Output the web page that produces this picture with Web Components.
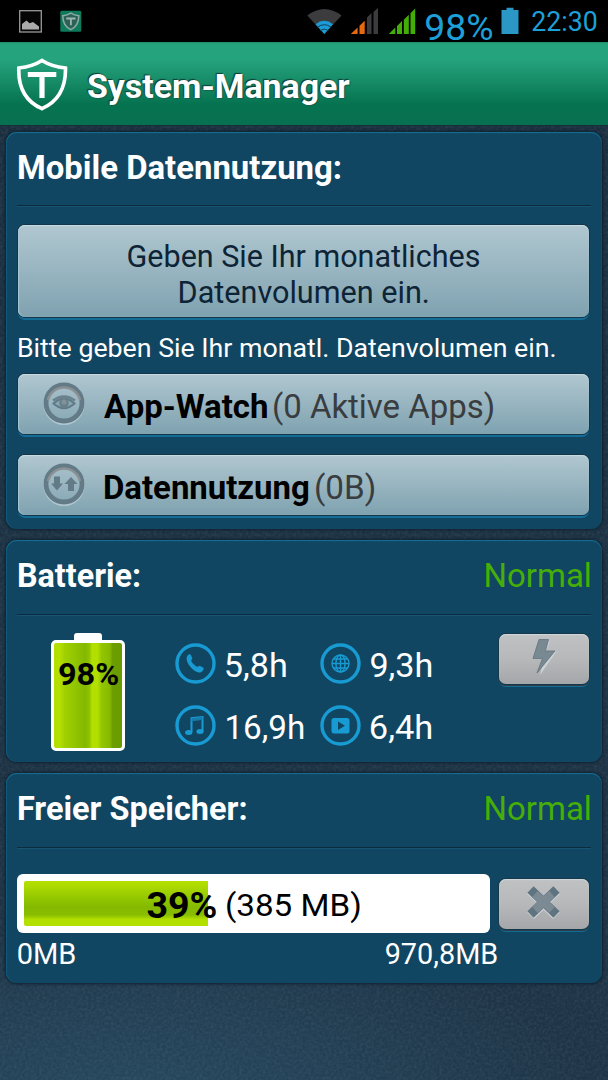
<!DOCTYPE html>
<html lang="de">
<head>
<meta charset="utf-8">
<title>System-Manager</title>
<style>
html, body {
    margin: 0;
    height: 100%;
    overflow: hidden;
    font-family: Roboto, "Liberation Sans", sans-serif;
    color: #fff;
    background: #1c3345;
}
</style>
</head>
<body>
<system-manager></system-manager>

<script>
const define = (name, html, setup) => {
    const template = document.createElement('template');
    template.innerHTML = html;
    window.customElements.define(name, class extends HTMLElement {
        constructor() {
            super();
            this.attachShadow({mode: 'open'});
            this.shadowRoot.appendChild(template.content.cloneNode(true));
        }

        connectedCallback() {
            if (setup) setup(this, this.shadowRoot);
        }
    });
};

// One line of text whose glyphs are condensed to fill "width" exactly.
class FitLabel extends HTMLElement {

    constructor() {
        super();
        this.attachShadow({mode: 'open'});
        this.shadowRoot.innerHTML = `
        <style>
        :host {
            display: block;
            flex: none;
            white-space: nowrap;
        }
        span {
            display: block;
            transform-origin: 0 0;
        }
        </style>
        <span></span>`;
    }

    connectedCallback() {
        const size = Number(this.getAttribute('size'));
        const width = Number(this.getAttribute('width'));
        const weight = this.hasAttribute('bold') ? 700 : 400;
        const span = this.shadowRoot.querySelector('span');
        span.textContent = this.getAttribute('text');
        span.style.font = `${weight} ${size}px/${size}px Roboto, "Liberation Sans", sans-serif`;
        this.style.width = width + 'px';
        this.style.height = size + 'px';

        // measured at ten times the size, the ink bounds are whole pixels
        const ctx = document.createElement('canvas').getContext('2d');
        ctx.font = `${weight} ${size * 10}px Roboto, "Liberation Sans", sans-serif`;
        const m = ctx.measureText(span.textContent);
        const left = m.actualBoundingBoxLeft / 10;
        const scale = width / (left + m.actualBoundingBoxRight / 10);
        span.style.transform = `translateX(${left * scale}px) scaleX(${scale})`;
    }
}
window.customElements.define('fit-label', FitLabel);

define('status-bar', `
<style>
:host {
    display: flex;
    height: 42px;
    background: #000;
    color: #1d9fd8;
}
svg { flex: none; display: block; }
.time { margin: 9px 0 0 13px; }
.pct { margin: 9px 0 0 9.500px; }
</style>
<svg width="416" height="42" viewBox="0 0 416 42">
    <rect x="19.7" y="10.7" width="21.6" height="21.3" fill="#050505" stroke="#999" stroke-width="1.3"/>
    <path d="M22 29.5V24l4.5-3.5 3 2.8 3.5-1.2 6 4.4v3z" fill="#aaa"/>
    <rect x="60.3" y="10.8" width="21" height="21" rx="1.5" fill="#0d7a5a"/>
    <path d="M70.8 13.2c2.600 1.700 5 2.300 8 2.500 0 6.500-1.800 11-8 13.900-6.200-2.900-8-7.400-8-13.900 3-.2 5.400-.8 8-2.500z" fill="#2a6256" stroke="#8faaa6" stroke-width="1.5"/>
    <path d="M66.300 18.500h9.200M70.900 18.500v6.800" stroke="#a0b4b0" stroke-width="1.800"/>
    <path d="M307.300 15.500Q324.500 2.500 341.500 15.500L324.300 34z" fill="#3c3c3e"/>
    <path d="M315.500 24.200Q324.300 17.500 333 24.200L324.300 34z" fill="#1b9cd8"/>
    <path d="M317.500 27.200q6.800-5 13.600 0M320.300 30.500q4-3 8 0" fill="none" stroke="#123f56" stroke-width="1"/>
    <g fill="#3c3c3e"><path d="M367 17.500l4.500-4.500v21H367zM373.500 12l4.500-4.300V34h-4.500z"/></g>
    <g fill="#e8690f"><path d="M350.800 34l6.800-6.600V34zM359.500 25.800l5.200-5V34h-5.200z"/></g>
    <g fill="#44ae09"><path d="M388.800 34l6.500-6.400V34zM397 26l5-5v13h-5zM403.800 19.800l5-5V34h-5zM410.500 13.300l4.700-4.800V34h-4.700z"/></g>
</svg>
<fit-label class="pct" text="98%" size="37.500" width="66.500"></fit-label>
<svg width="18" height="42" viewBox="0 0 18 42" style="margin-left:9px"><path d="M.5 10h5V7.800h7V10h5v24H.5z" fill="#2a97c6"/></svg>
<fit-label class="time" text="22:30" size="27" width="64.500"></fit-label>
`);

define('title-bar', `
<style>
:host {
    display: flex;
    box-sizing: border-box;
    height: 84px;
    border-bottom: 1px solid #173035;
    background: linear-gradient(#1c8d69 0, #25a37c 2px, #25a37c 18px, #067350 62px, #087051 100%);
}
svg { display: block; margin: 14px 0 0 16px; }
fit-label {
    margin: 28px 0 0 20px;
    text-shadow: -1px -1px 1px #0c3b35, 1px 1px 1px #15604f;
}
</style>
<svg width="52" height="56" viewBox="0 0 52 56">
    <path d="M26 4.500C33 9 40 11 49.500 12c.4 18-6 33-23.500 40.700C8.500 45 2.200 30 2.800 12 12 11 19 9 26 4.500z" fill="none" stroke="#fff" stroke-width="3.600"/>
    <path d="M11.800 18.500h28.500M26 18.500v23.500" stroke="#fff" stroke-width="5.200"/>
</svg>
<fit-label text="System-Manager" bold size="33" width="261.500"></fit-label>
`);

define('info-card', `
<style>
:host {
    display: block;
    box-sizing: border-box;
    border-radius: 11px;
    background: #104662;
    box-shadow: inset 0 1px 1px #186f96, inset 1px 0 1px #14587a, 0 0 3px 1px #10202e;
}
header {
    display: flex;
    justify-content: space-between;
    height: var(--head, 74px);
    margin: 0 11px;
    padding: 19px 2px 0 2px;
    box-sizing: border-box;
    border-bottom: 1px solid #0b2b3f;
    box-shadow: 0 1px 0 #195372;
}
.state { color: #46ae08; margin-top: 1px; }
</style>
<header></header>
<slot></slot>
`, (host, root) => {
    let html = `<fit-label text="${host.getAttribute('heading')}" bold size="33" width="${host.getAttribute('heading-width')}"></fit-label>`;
    if (host.hasAttribute('state')) {
        html += `<fit-label class="state" text="${host.getAttribute('state')}" size="32.500" width="103.500"></fit-label>`;
    }
    root.querySelector('header').innerHTML = html;
});

define('push-button', `
<style>
:host {
    display: flex;
    box-sizing: border-box;
    border-radius: 7px;
    color: #0d2436;
    background: linear-gradient(#b0c7d0, #7fa2b0);
    box-shadow: inset 0 1px 1px #c9dde3, inset 1px 0 1px #a9c4ce, 0 0 0 1px #14364a, 0 3px 0 0 #136d96;
}
:host([grey]) {
    justify-content: center;
    background: linear-gradient(#bfc1c3, #b6b8ba 50%, #a4a6a9);
    box-shadow: inset 0 1px 1px #cfdadd, 0 0 0 1px #17384b, 0 1px 0 1px #2b3d48, 0 3px 0 0 #136d96;
}
</style>
<slot></slot>
`);

const battery = {
    phone: '<path d="M12.200 13.200c1.600-2.700 3.300-2.500 4.200-.3l1 2.800c-1.800 1.400-1.300 2.800 1.300 5.600 2.400 2.600 4 3.200 5.700 1.400l3.700 1.800c1.200.8.600 2.900-1.700 4.400-3 1.700-7.500-.8-10.700-4.600-3.400-4-5-8.500-3.500-11.100z" fill="#189bd3"/>',
    globe: '<g fill="none" stroke="#189bd3" stroke-width="1.400"><circle cx="20.500" cy="20.500" r="8.500"/><ellipse cx="20.500" cy="20.500" rx="4.600" ry="8.500"/><path d="M20.500 12v17M12 20.500h17M13.500 16h14M13.500 25h14"/></g>',
    music: '<path d="M16.500 27.300V13.200l11-1.200v14.400" fill="none" stroke="#189bd3" stroke-width="2"/><path d="M16.500 13.200l11-1.200v3l-11 1.200z" fill="#147bab"/><ellipse cx="13.700" cy="27.600" rx="3.600" ry="2.500" fill="#189bd3"/><ellipse cx="25" cy="26.500" rx="3.600" ry="2.500" fill="#189bd3"/>',
    video: '<rect x="11.500" y="13" width="18" height="15.500" rx="2.500" fill="#189bd3"/><path d="M18 16.500l7 4.200-7 4.200z" fill="#104662"/>'
};

define('usage-stat', `
<style>
:host { display: flex; height: 41px; }
svg { flex: none; display: block; }
fit-label { margin: 7px 0 0 10px; }
</style>
`, (host, root) => {
    root.innerHTML += `
    <svg width="41" height="41" viewBox="0 0 41 41"><circle cx="20.500" cy="20.500" r="18.500" fill="none" stroke="#189bd3" stroke-width="3.400"/>${battery[host.getAttribute('icon')]}</svg>
    <fit-label text="${host.getAttribute('value')}" size="32.500" width="${host.getAttribute('value-width')}" style="${host.hasAttribute('indent') ? 'margin-left:11px' : ''}"></fit-label>`;
});

define('battery-gauge', `
<style>
:host { display: flex; flex-direction: column; align-items: center; width: 74px; color: #000; }
.cap { width: 28px; height: 7px; border-radius: 3px 3px 0 0; background: #fff; }
.cell {
    display: flex;
    justify-content: center;
    box-sizing: border-box;
    width: 74px;
    height: 111px;
    padding-top: 15px;
    border: 3px solid #fff;
    border-radius: 5px;
    background: linear-gradient(90deg, #b4e000 0 8%, #a1d000 16%, #92c600 30%, #84b800 46%, #8fc400 52%, #b4e000 56%, #b2de00 64%, #93c600 70%, #87ba00 82%, #6d9f00 86%, #6a9b00 98%);
}
</style>
<div class="cap"></div>
<div class="cell"><fit-label text="98%" bold size="32" width="59"></fit-label></div>
`);

define('memory-bar', `
<style>
:host { display: block; width: 473px; color: #000; }
.track {
    display: grid;
    box-sizing: border-box;
    height: 59px;
    padding: 7px;
    border-radius: 6px;
    background: #fff;
}
.fill, .value { grid-area: 1 / 1; }
.fill {
    width: 184px;
    height: 45px;
    border-radius: 2px 0 0 2px;
    background: linear-gradient(#b4e000 0, #aedb00 10%, #95c900 35%, #84b900 58%, #88bd00 75%, #a4d300 82%, #b4e000 86%);
}
.value { display: flex; margin-left: 122.500px; padding-top: 6px; }
.value fit-label + fit-label { margin: 2px 0 0 11.500px; }
.scale { display: flex; justify-content: space-between; margin: 7px -7px 0 1px; color: #fff; }
</style>
<div class="track">
    <div class="fill"></div>
    <div class="value">
        <fit-label text="39%" bold size="37" width="69"></fit-label>
        <fit-label text="(385 MB)" size="32" width="132.500"></fit-label>
    </div>
</div>
<div class="scale">
    <fit-label text="0MB" size="29" width="57"></fit-label>
    <fit-label text="970,8MB" size="29" width="111"></fit-label>
</div>
`);

define('system-manager', `
<style>
:host {
    display: flex;
    flex-direction: column;
    height: 1080px;
    background:
        url("data:image/svg+xml,%3Csvg xmlns='http://www.w3.org/2000/svg' width='200' height='200'%3E%3Cfilter id='n'%3E%3CfeTurbulence type='fractalNoise' baseFrequency='.35' numOctaves='2' stitchTiles='stitch'/%3E%3CfeColorMatrix values='0 0 0 0 .2 0 0 0 0 .35 0 0 0 0 .45 .25 0 0 0 -.08'/%3E%3C/filter%3E%3Crect width='200' height='200' filter='url(%23n)'/%3E%3C/svg%3E"),
        radial-gradient(460px 170px at 22% 101%, #25475c, #233f54 45%, transparent),
        linear-gradient(#1a2d3d, #1c3142 50%, #1e3345);
}
main {
    display: flex;
    flex-direction: column;
    gap: 11px;
    padding: 6px 6px 0;
}
.data { height: 397px; --head: 74px; }
.power { height: 222px; --head: 75px; }
.memory { height: 210px; --head: 75px; }
.stack { display: flex; flex-direction: column; padding: 19px 13px 0 12px; }
.volume { flex-direction: column; align-items: center; height: 92px; padding: 17px 0 0 0; gap: 5px; }
.hint { margin: 18px 0 0 .500px; }
.row { height: 60px; padding-left: 25px; }
.row svg { margin-top: 8px; flex: none; }
.row .name { color: #000; margin: 16px 0 0 19px; }
.row .detail { color: #393d40; margin: 16px 0 0 7px; }
.battery { display: grid; grid-template-columns: 124px 145px auto 90px; padding: 18px 13px 0 45px; align-items: start; }
.stats { display: flex; flex-direction: column; gap: 20.500px; margin-top: 10px; }
.free { display: flex; justify-content: space-between; padding: 26px 13px 0 11px; }
</style>
<status-bar></status-bar>
<title-bar></title-bar>
<main>
    <info-card class="data" heading="Mobile Datennutzung:" heading-width="321.500">
        <div class="stack">
            <push-button class="volume">
                <fit-label text="Geben Sie Ihr monatliches" size="30.500" width="351"></fit-label>
                <fit-label text="Datenvolumen ein." size="30.500" width="247.500"></fit-label>
            </push-button>
            <fit-label class="hint" text="Bitte geben Sie Ihr monatl. Datenvolumen ein." size="26" width="535.500"></fit-label>
            <push-button class="row" style="margin-top:13px">
                <svg width="42" height="44" viewBox="0 0 42 44">
                    <circle cx="21" cy="22.500" r="18.500" fill="none" stroke="#b1c8d0" stroke-width="4"/>
                    <circle cx="21" cy="21" r="18" fill="none" stroke="#637b87" stroke-width="4.800"/>
                    <path d="M5 18a16.500 16.500 0 0 1 32 0" fill="none" stroke="#8b9193" stroke-width="2.500"/>
                    <path d="M10.500 21.500Q21 12 31.500 21.500 21 31 10.500 21.500z" fill="#86a8b5" stroke="#617986" stroke-width="2"/>
                    <path d="M10 18.500Q21 10.500 32 18.500" fill="none" stroke="#6a828d" stroke-width="2.500"/>
                    <circle cx="21" cy="21" r="4.800" fill="#68808b"/><circle cx="21" cy="20" r="2.500" fill="#849197"/>
                </svg>
                <fit-label class="name" text="App-Watch" bold size="33" width="163"></fit-label>
                <fit-label class="detail" text="(0 Aktive Apps)" size="33" width="219"></fit-label>
            </push-button>
            <push-button class="row" style="margin-top:21px">
                <svg width="42" height="44" viewBox="0 0 42 44">
                    <circle cx="21" cy="22.500" r="18.500" fill="none" stroke="#b1c8d0" stroke-width="4"/>
                    <circle cx="21" cy="21" r="18" fill="none" stroke="#637b87" stroke-width="4.800"/>
                    <path d="M5 18a16.500 16.500 0 0 1 32 0" fill="none" stroke="#8b9193" stroke-width="2.500"/>
                    <path d="M11 13.500h6v7h3l-6 7-6-7h3zM25 28h6v-7h3.500l-6.500-7-6.500 7H25z" fill="#637b87"/>
                </svg>
                <fit-label class="name" text="Datennutzung" bold size="33" width="203.500" style="margin-left:20px"></fit-label>
                <fit-label class="detail" text="(0B)" size="33" width="58"></fit-label>
            </push-button>
        </div>
    </info-card>

    <info-card class="power" heading="Batterie:" heading-width="120.500" state="Normal">
        <div class="battery">
            <battery-gauge></battery-gauge>
            <div class="stats">
                <usage-stat icon="phone" value="5,8h" value-width="59.500"></usage-stat>
                <usage-stat icon="music" value="16,9h" value-width="76" indent></usage-stat>
            </div>
            <div class="stats">
                <usage-stat icon="globe" value="9,3h" value-width="60"></usage-stat>
                <usage-stat icon="video" value="6,4h" value-width="60"></usage-stat>
            </div>
            <push-button grey style="height:50px;margin-top:1px">
                <svg width="34" height="42" viewBox="0 0 34 42">
                    <path d="M12.500 6.500h10.500l-3.500 11h10L13 41l4-16H7z" fill="#ccd2d5"/>
                    <path d="M12 5.500h9.500l-3 11.500h9.500L10 39l5.500-14.500H6z" fill="#798992" stroke="#5f727d" stroke-width=".8"/>
                </svg>
            </push-button>
        </div>
    </info-card>

    <info-card class="memory" heading="Freier Speicher:" heading-width="227" state="Normal">
        <div class="free">
            <memory-bar></memory-bar>
            <push-button grey style="width:90px;height:50px;margin-top:5px">
                <svg width="40" height="42" viewBox="0 0 40 42">
                    <path d="M6.500 11.500l26 25M32.500 11.500l-26 25" stroke="#ccd2d5" stroke-width="10"/>
                    <path d="M6.500 10.500l26 25M32.500 10.500l-26 25" stroke="#5f7480" stroke-width="9"/>
                    <path d="M11 15l17 16M28 15l-17 16" stroke="#7b8a93" stroke-width="8"/>
                </svg>
            </push-button>
        </div>
    </info-card>
</main>
`);
</script>
</body>
</html>
